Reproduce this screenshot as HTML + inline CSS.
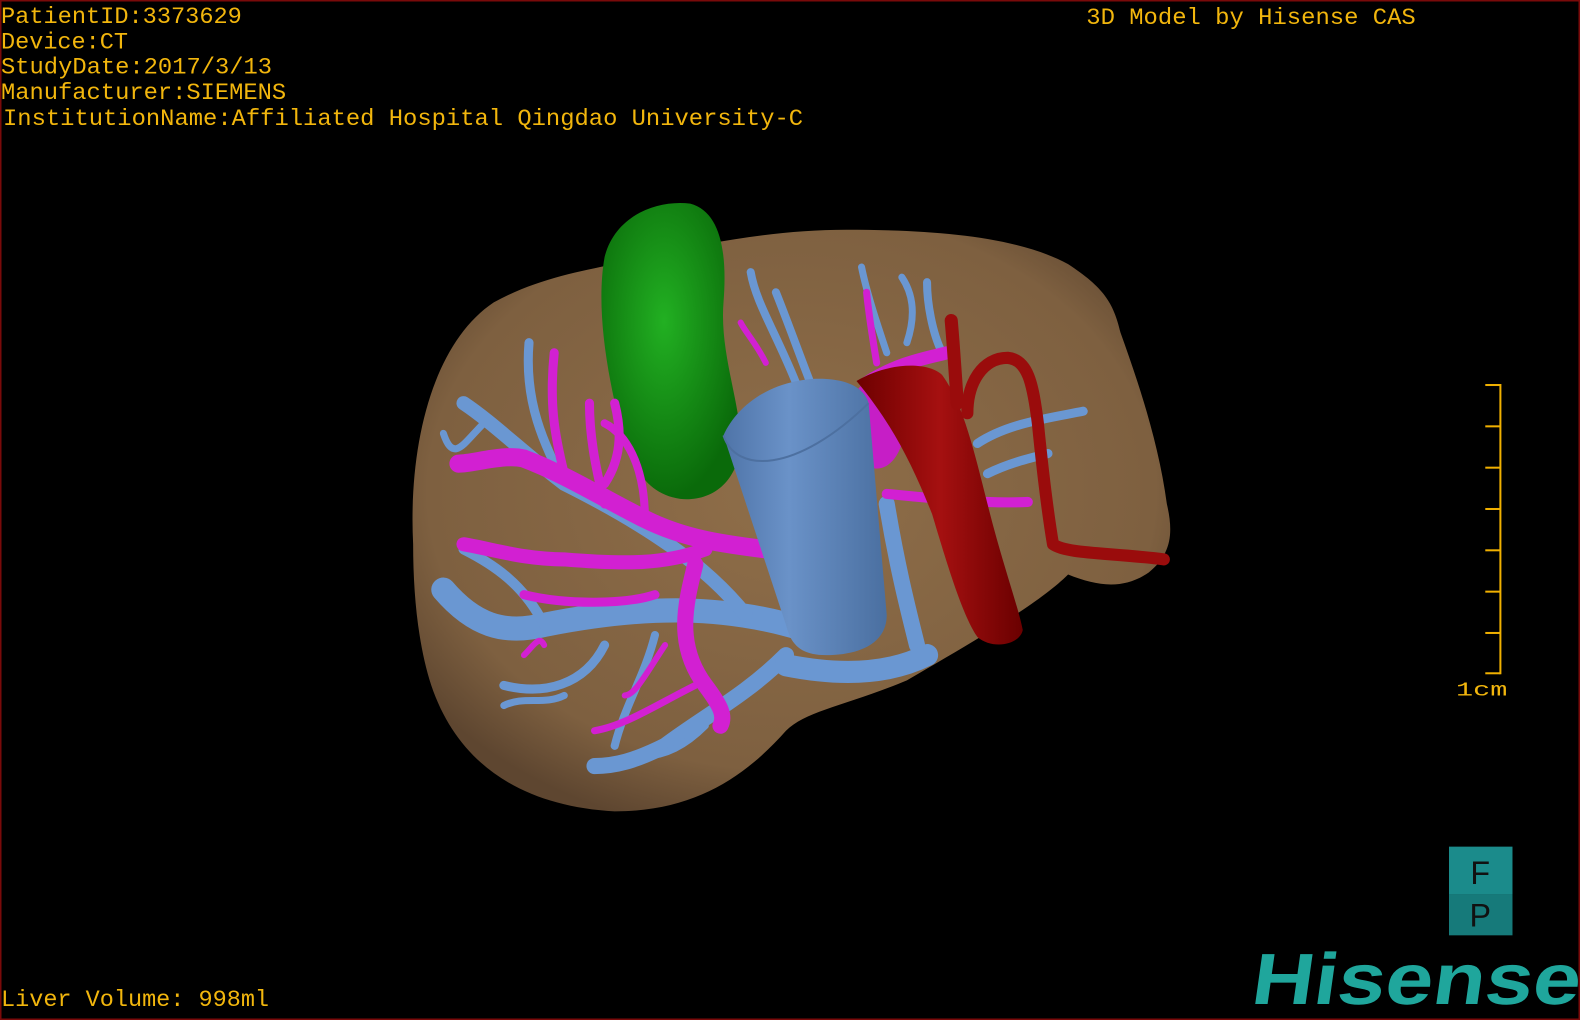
<!DOCTYPE html>
<html><head><meta charset="utf-8"><style>
html,body{margin:0;padding:0;background:#000;width:1580px;height:1020px;overflow:hidden}
svg{display:block}
</style></head><body>
<svg width="1580" height="1020" viewBox="0 0 1568 1012" preserveAspectRatio="none" xmlns="http://www.w3.org/2000/svg">
<defs>
<radialGradient id="lv" cx="0.5" cy="0.45" r="0.6">
<stop offset="0" stop-color="#8f6e49"/><stop offset="0.8" stop-color="#7e6040"/><stop offset="1" stop-color="#5e4630"/>
</radialGradient>
<radialGradient id="gr" cx="0.45" cy="0.4" r="0.6">
<stop offset="0" stop-color="#22b022"/><stop offset="1" stop-color="#0a6a0a"/>
</radialGradient>
<linearGradient id="ivc" x1="0" x2="1" y1="0" y2="0">
<stop offset="0" stop-color="#4f74a8"/><stop offset="0.4" stop-color="#6a92c8"/><stop offset="1" stop-color="#4a6fa0"/>
</linearGradient>
<linearGradient id="ao" x1="0" x2="1">
<stop offset="0" stop-color="#6e0000"/><stop offset="0.5" stop-color="#a51010"/><stop offset="1" stop-color="#6a0000"/>
</linearGradient>
</defs>
<rect x="0.5" y="0.5" width="1567" height="1011" fill="#000" stroke="#7a0a0a" stroke-width="2"/>

<!-- liver -->
<path d="M410,540 C405,440 430,340 490,300 C530,278 570,270 610,262 C680,245 760,228 840,228 C930,228 1010,235 1060,262 C1095,285 1105,300 1112,330 C1130,380 1150,440 1158,500 C1165,530 1162,550 1140,568 C1115,585 1090,582 1060,570 C1030,600 960,640 900,675 C840,700 800,705 780,725 C740,770 690,805 610,805 C520,800 455,760 428,680 C415,640 410,590 410,540 Z" fill="url(#lv)"/>

<!-- green gallbladder -->
<path d="M600,255 C610,215 650,198 685,202 C715,210 722,250 718,300 C714,350 735,400 735,440 C732,480 705,498 675,495 C640,490 625,460 615,420 C600,360 592,300 600,255 Z" fill="url(#gr)"/>

<!-- blue hepatic vein branches -->
<g stroke="#6a97d2" fill="none" stroke-linecap="round" stroke-linejoin="round">
<path d="M800,625 C720,600 640,600 540,620 C500,630 470,620 440,585" stroke-width="24"/>
<path d="M780,650 C740,690 700,710 660,740 C630,755 610,760 590,760" stroke-width="16"/>
<path d="M740,610 C700,560 640,520 560,480 C520,450 490,420 460,400" stroke-width="14"/>
<path d="M560,480 C540,440 520,400 525,340" stroke-width="9"/>
<path d="M540,620 C520,580 490,560 460,545" stroke-width="10"/>
<path d="M600,640 C580,680 540,690 500,680" stroke-width="9"/>
<path d="M650,630 C640,670 620,700 610,740" stroke-width="8"/>
<path d="M480,420 C460,440 450,460 440,430" stroke-width="7"/>
<path d="M500,700 C520,690 540,700 560,690" stroke-width="7"/>
<path d="M700,720 C680,740 660,750 640,750" stroke-width="7"/>
<path d="M830,440 C810,400 790,340 770,290 M790,380 C770,330 750,300 745,270" stroke-width="8"/>
<path d="M880,350 C870,320 860,290 855,265 M900,340 C910,310 905,290 895,275" stroke-width="7"/>
<path d="M935,350 C925,330 920,300 920,280" stroke-width="8"/>
<path d="M970,440 C1000,420 1040,415 1075,408 M980,470 C1000,460 1020,455 1040,450" stroke-width="9"/>
<path d="M880,500 C890,560 900,600 910,640" stroke-width="16"/>
<path d="M780,660 C830,670 880,670 920,650" stroke-width="22"/>
</g>

<!-- magenta portal branches -->
<g stroke="#d220d2" fill="none" stroke-linecap="round" stroke-linejoin="round">
<path d="M760,545 C720,540 680,535 640,515 C600,495 560,470 520,455 C500,450 470,460 455,460" stroke-width="18"/>
<path d="M700,545 C660,560 620,560 560,555 C520,555 490,545 460,540" stroke-width="14"/>
<path d="M690,560 C680,600 670,640 700,680 C715,700 720,710 715,720" stroke-width="16"/>
<path d="M600,500 C590,460 585,430 585,400 M560,470 C550,430 545,400 550,350 M600,480 C620,450 615,420 610,400" stroke-width="9"/>
<path d="M640,515 C640,460 620,430 600,420" stroke-width="8"/>
<path d="M650,590 C620,600 560,600 520,590" stroke-width="9"/>
<path d="M690,680 C650,700 620,720 590,725" stroke-width="7"/>
<path d="M660,640 C640,670 630,690 620,690" stroke-width="6"/>
<path d="M760,360 C750,340 740,330 735,320" stroke-width="6"/>
<path d="M870,360 C865,330 862,310 860,290" stroke-width="7"/>
<path d="M860,380 C890,360 920,355 940,350" stroke-width="13"/>
<path d="M880,490 C930,495 980,500 1020,498" stroke-width="10"/>
<path d="M520,650 C530,640 535,630 540,640" stroke-width="6"/>
</g>
<ellipse cx="870" cy="420" rx="28" ry="45" fill="#c61ec6"/>

<!-- IVC cylinder -->
<path d="M718,432 C730,405 760,380 805,376 C840,374 858,385 862,400 L880,610 C880,640 850,650 820,650 C795,650 785,640 780,620 Z" fill="url(#ivc)"/>
<path d="M718,432 C730,470 790,470 862,400" fill="none" stroke="#4d70a0" stroke-width="2"/>

<!-- aorta -->
<path d="M850,378 C880,360 920,358 935,372 C955,400 965,440 980,500 C995,560 1010,600 1015,625 C1012,640 985,645 970,632 C955,610 940,560 925,510 C905,460 885,420 850,378 Z" fill="url(#ao)"/>
<g stroke="#9a0c0c" fill="none" stroke-linecap="round" stroke-linejoin="round">
<path d="M944,318 C946,340 948,370 950,400" stroke-width="13"/>
<path d="M960,410 C960,380 975,355 1000,355 C1020,357 1025,380 1030,420 C1035,470 1040,510 1045,540 C1060,550 1100,548 1155,555" stroke-width="12"/>
</g>

<!-- text -->
<g font-family="'Liberation Mono', monospace" font-size="23" fill="#f2b60d">
<text x="1" y="23" textLength="239" lengthAdjust="spacingAndGlyphs">PatientID:3373629</text>
<text x="1" y="48" textLength="126" lengthAdjust="spacingAndGlyphs">Device:CT</text>
<text x="1" y="73" textLength="269" lengthAdjust="spacingAndGlyphs">StudyDate:2017/3/13</text>
<text x="1" y="98" textLength="283" lengthAdjust="spacingAndGlyphs">Manufacturer:SIEMENS</text>
<text x="3" y="124" textLength="794" lengthAdjust="spacingAndGlyphs">InstitutionName:Affiliated Hospital Qingdao University-C</text>
<text x="1078" y="24" textLength="327" lengthAdjust="spacingAndGlyphs">3D Model by Hisense CAS</text>
<text x="1" y="998" textLength="266" lengthAdjust="spacingAndGlyphs">Liver Volume: 998ml</text>
<text x="1445" y="690" font-size="19" textLength="51" lengthAdjust="spacingAndGlyphs">1cm</text>
</g>
<g stroke="#f0b000" stroke-width="2">
<line x1="1489" y1="381" x2="1489" y2="669"/>
<line x1="1474" y1="382" x2="1489" y2="382"/><line x1="1474" y1="423" x2="1489" y2="423"/>
<line x1="1474" y1="464" x2="1489" y2="464"/><line x1="1474" y1="505" x2="1489" y2="505"/>
<line x1="1474" y1="546" x2="1489" y2="546"/><line x1="1474" y1="587" x2="1489" y2="587"/>
<line x1="1474" y1="628" x2="1489" y2="628"/><line x1="1474" y1="668" x2="1489" y2="668"/>
</g>
<rect x="1438" y="840" width="63" height="47" fill="#1b8b8b"/>
<rect x="1438" y="887" width="63" height="41" fill="#167a7a"/>
<text x="1469" y="877" font-family="'Liberation Sans', sans-serif" font-size="32" fill="#111" text-anchor="middle">F</text>
<text x="1469" y="919" font-family="'Liberation Sans', sans-serif" font-size="32" fill="#111" text-anchor="middle">P</text>
<g transform="translate(1240,996) skewX(-8)">
<text x="0" y="0" font-family="'Liberation Sans', sans-serif" font-weight="bold" font-size="72" fill="#1fa69c" textLength="326" lengthAdjust="spacingAndGlyphs">Hisense</text>
</g>
</svg>
</body></html>
